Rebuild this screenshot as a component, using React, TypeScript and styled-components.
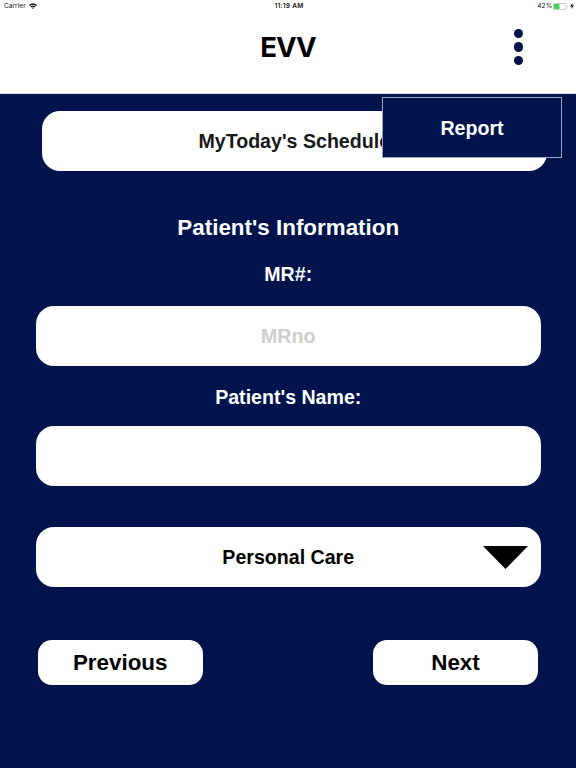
import React from "react";
import styled, { createGlobalStyle } from "styled-components";

const navy = "#00134c";

const GlobalStyle = createGlobalStyle`
  * { box-sizing: border-box; }
  body { margin: 0; background: ${navy}; }
  button, input { font: inherit; border: 0; padding: 0; margin: 0; }
`;

const Screen = styled.div`
  width: 576px;
  height: 768px;
  overflow: hidden;
  display: flex;
  flex-direction: column;
  background: ${navy};
  font-family: "Liberation Sans", Arial, sans-serif;
  font-weight: 700;
  font-size: 19.6px;
`;

const Header = styled.header`
  height: 94px;
  background: #fff;
  border-bottom: 1px solid #dcdde4;
`;

const StatusBar = styled.div`
  height: 12px;
  padding: 0 3px 0 4px;
  display: grid;
  grid-template-columns: 1fr auto 1fr;
  align-items: center;
  font-family: Inter, sans-serif;
  font-size: 6.6px;
  font-weight: 400;
  line-height: 12px;
  color: #111;
`;

const StatusGroup = styled.div<{ $end?: boolean }>`
  display: flex;
  align-items: center;
  gap: ${(p) => (p.$end ? "1.2px" : "3px")};
  justify-content: ${(p) => (p.$end ? "flex-end" : "flex-start")};
  margin-right: ${(p) => (p.$end ? "-0.5px" : "0")};
`;

const Clock = styled.span`
  font-weight: 600;
  letter-spacing: 0.22px;
  padding-left: 1px;
`;

const TitleBar = styled.div`
  height: 70px;
  padding: 0 52.7px;
  display: grid;
  grid-template-columns: 1fr auto 1fr;
  align-items: center;
`;

const Title = styled.h1`
  grid-column: 2;
  margin: 0;
  font-family: Inter, sans-serif;
  font-size: 27.6px;
  line-height: 34px;
  font-weight: 700;
  letter-spacing: -0.9px;
  color: #000;
`;

const MenuButton = styled.button`
  justify-self: end;
  display: flex;
  flex-direction: column;
  gap: 4.2px;
  background: none;
`;

const Dot = styled.span`
  width: 9.3px;
  height: 9.3px;
  border-radius: 50%;
  background: ${navy};
`;

const Content = styled.main`
  position: relative;
  flex: 1;
  padding: 17px 35px 0 35.5px;
  display: flex;
  flex-direction: column;
`;

const Bar = styled.div<{ $top?: number; $shift?: number }>`
  position: relative;
  flex: none;
  height: 59.8px;
  margin-top: ${(p) => p.$top ?? 0}px;
  margin-left: ${(p) => p.$shift ?? 0}px;
  margin-right: ${(p) => -(p.$shift ?? 0)}px;
  border-radius: 18px;
  background: #fff;
  color: #000;
  display: flex;
  align-items: center;
  justify-content: center;
`;

const ScheduleText = styled.span`
  padding-top: 2px;
  color: #17181a;
`;

const Field = styled.input`
  width: 100%;
  height: 100%;
  background: transparent;
  text-align: center;
  outline: none;
  &::placeholder { color: #cdcdcd; opacity: 1; }
`;

const Heading = styled.h2`
  margin: 44.7px 0 0;
  font-size: 22.4px;
  line-height: 26px;
  text-align: center;
  color: #fff;
`;

const Label = styled.label<{ $top: number }>`
  margin-top: ${(p) => p.$top}px;
  line-height: 22px;
  text-align: center;
  color: #fff;
`;

const Arrow = styled.svg`
  position: absolute;
  right: 13.5px;
  top: 18.7px;
  width: 45px;
  height: 23px;
`;

const Actions = styled.div`
  margin-top: 52.6px;
  padding: 0 3px 0 2.2px;
  display: flex;
  justify-content: space-between;
`;

const ActionButton = styled.button`
  width: 165px;
  height: 45.2px;
  padding-top: 2px;
  border-radius: 14px;
  background: #fff;
  color: #000;
  font-size: 22.4px;
`;

const Menu = styled.div`
  position: absolute;
  top: 3px;
  right: 14px;
  width: 180px;
  height: 61px;
  padding-top: 1px;
  border: 1px solid #9ca3be;
  background: ${navy};
  color: #fff;
  display: flex;
  align-items: center;
  justify-content: center;
`;

const Wifi = () => (
  <svg width="8" height="6" viewBox="0 0 8 6">
    <path d="M0 1.9Q4-1.4 8 1.9L7 3Q4 .5 1 3Z" fill="#111" />
    <path d="M1.5 3.4Q4 1.4 6.5 3.4L5.5 4.4Q4 3.2 2.5 4.4Z" fill="#111" />
    <path d="M3 4.8Q4 4.1 5 4.8L4 6Z" fill="#111" />
  </svg>
);

const Battery = () => (
  <svg width="15" height="7" viewBox="0 0 15 7">
    <rect x=".25" y=".55" width="13" height="5.9" rx="1" fill="#fff" stroke="#999" strokeWidth=".5" />
    <rect x=".8" y="1" width="5.7" height="5" rx=".5" fill="#43d755" />
    <path d="M14 2.5Q15 3.5 14 4.5Z" fill="#999" />
  </svg>
);

const Bolt = () => (
  <svg width="4" height="6" viewBox="0 0 4 6">
    <path d="M2.6 0L0 3.4H1.7L1.3 6L4 2.5H2.2Z" fill="#111" />
  </svg>
);

export default function App() {
  return (
    <>
      <GlobalStyle />
      <Screen>
        <Header>
          <StatusBar>
            <StatusGroup>
              <span>Carrier</span>
              <Wifi />
            </StatusGroup>
            <Clock>11:19 AM</Clock>
            <StatusGroup $end>
              <span>42%</span>
              <Battery />
              <Bolt />
            </StatusGroup>
          </StatusBar>
          <TitleBar>
            <Title>EVV</Title>
            <MenuButton aria-label="Menu">
              <Dot />
              <Dot />
              <Dot />
            </MenuButton>
          </TitleBar>
        </Header>
        <Content>
          <Bar $shift={6}>
            <ScheduleText>MyToday's Schedule</ScheduleText>
          </Bar>
          <Heading>Patient's Information</Heading>
          <Label $top={21.8} htmlFor="mr">MR#:</Label>
          <Bar $top={21.2}>
            <Field id="mr" placeholder="MRno" />
          </Bar>
          <Label $top={19.8} htmlFor="name">Patient's Name:</Label>
          <Bar $top={18.4}>
            <Field id="name" />
          </Bar>
          <Bar $top={41.2}>
            <span>Personal Care</span>
            <Arrow viewBox="0 0 45 23">
              <path d="M0 0H45L22.5 23Z" fill="#000" />
            </Arrow>
          </Bar>
          <Actions>
            <ActionButton>Previous</ActionButton>
            <ActionButton>Next</ActionButton>
          </Actions>
          <Menu>Report</Menu>
        </Content>
      </Screen>
    </>
  );
}
